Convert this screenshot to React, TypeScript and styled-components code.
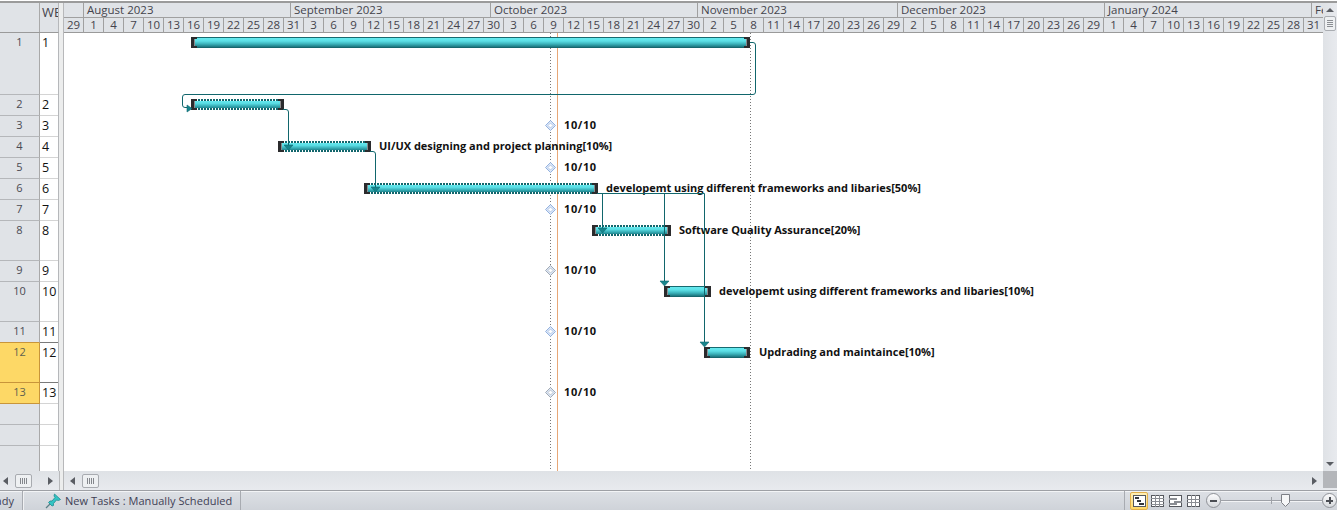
import React from 'react'
import styled, { createGlobalStyle } from 'styled-components'

const GlobalStyle = createGlobalStyle`
  html, body { margin: 0; padding: 0; background: #fff; overflow: hidden; }
  body { font-family: "Open Sans", "Noto Sans", sans-serif; }
`

const rows = [
  { n: 1, h: 62 }, { n: 2, h: 21 }, { n: 3, h: 21 }, { n: 4, h: 21 }, { n: 5, h: 21 },
  { n: 6, h: 21 }, { n: 7, h: 21 }, { n: 8, h: 40 }, { n: 9, h: 21 }, { n: 10, h: 40 },
  { n: 11, h: 21, next: true }, { n: 12, h: 40, on: true, next: true }, { n: 13, h: 21, on: true },
  { h: 21 }, { h: 21 }, { h: 26 },
]

const months = [
  { label: 'August 2023', w: 207 },
  { label: 'September 2023', w: 200 },
  { label: 'October 2023', w: 207 },
  { label: 'November 2023', w: 200 },
  { label: 'December 2023', w: 207 },
  { label: 'January 2024', w: 207 },
  { label: 'February 2024', w: 40 },
]

const days = [
  29, 1, 4, 7, 10, 13, 16, 19, 22, 25, 28, 31, 3, 6, 9, 12, 15, 18, 21, 24, 27, 30, 3, 6, 9, 12, 15, 18, 21, 24, 27, 30,
  2, 5, 8, 11, 14, 17, 20, 23, 26, 29, 2, 5, 8, 11, 14, 17, 20, 23, 26, 29, 1, 4, 7, 10, 13, 16, 19, 22, 25, 28, 31,
]

// chart coordinates: x from the left of the page minus 64, y minus 33
const bars = [
  { x: 127, y: 4, w: 559, progress: false },
  { x: 127, y: 66, w: 93, progress: true },
  { x: 214, y: 108, w: 93, progress: true },
  { x: 300, y: 150, w: 234, progress: true },
  { x: 528, y: 192, w: 79, progress: true },
  { x: 600, y: 253, w: 47, progress: false },
  { x: 640, y: 314, w: 46, progress: false },
]

const labels = [
  { x: 315, y: 105, t: 'UI/UX designing and project planning[10%]' },
  { x: 542, y: 147, t: 'developemt using different frameworks and libaries[50%]' },
  { x: 615, y: 189, t: 'Software Quality Assurance[20%]' },
  { x: 655, y: 250, t: 'developemt using different frameworks and libaries[10%]' },
  { x: 695, y: 311, t: 'Updrading and maintaince[10%]' },
]

const dates = [84, 126, 168, 229, 290, 351]

const milestones = [
  { y: 92, c: '#94b2e0' }, { y: 134, c: '#94b2e0' }, { y: 176, c: '#94b2e0' },
  { y: 237, c: '#a3abb5' }, { y: 298, c: '#94b2e0' }, { y: 359, c: '#a3abb5' },
]

const arrows = [
  [220, 112], [307, 154], [534, 195], [596, 248], [636, 309],
]

const App = styled.div`
  width: 1337px;
  height: 510px;
  display: flex;
  flex-direction: column;
  overflow: hidden;
  color: #3b3b46;
`
const TopEdge = styled.div`
  height: 3px;
  background: linear-gradient(#fff 0, #fff 1px, #9b9b9b 1px, #9b9b9b 3px);
  flex: none;
`
const Main = styled.div`
  display: flex;
  height: 468px;
  flex: none;
`
const TablePane = styled.div`
  width: 59px;
  flex: none;
  overflow: hidden;
  display: flex;
  flex-direction: column;
`
const HeaderRow = styled.div`
  display: flex;
  height: 29px;
  flex: none;
  border-bottom: 1px solid #9a9a9a;
  box-sizing: content-box;
  border-right: 1px solid #b5b7ba;
`
const Corner = styled.div`
  width: 40px;
  flex: none;
  box-sizing: border-box;
  background: #e0e3e7;
  border-right: 1px solid #a9a9a9;
`
const ColHead = styled.div`
  flex: 1;
  background: #e0e3e7;
  font-size: 13px;
  line-height: 18px;
  padding-left: 2px;
  overflow: hidden;
  white-space: nowrap;
  box-sizing: border-box;
  color: #44444c;
`
const Row = styled.div<{ $h: number }>`
  display: flex;
  height: ${p => p.$h}px;
  flex: none;
  border-right: 1px solid #b5b7ba;
`
const RowHead = styled.div<{ $on?: boolean; $next?: boolean }>`
  width: 40px;
  flex: none;
  box-sizing: border-box;
  background: ${p => (p.$on ? '#fdd866' : '#e0e3e7')};
  border-right: 1px solid ${p => (p.$on ? '#c8953a' : '#a9a9a9')};
  border-bottom: 1px solid ${p => (p.$on || p.$next ? '#c8953a' : '#b5b7ba')};
  font-size: 11px;
  line-height: 12px;
  padding-top: 3px;
  text-align: center;
  color: ${p => (p.$on ? '#5d6150' : '#4a4a52')};
`
const RowId = styled.div<{ $next?: boolean }>`
  flex: 1;
  box-sizing: border-box;
  border-bottom: 1px solid ${p => (p.$next ? '#7a7a7a' : '#d4d4d4')};
  font-size: 12.5px;
  line-height: 16px;
  padding: 2px 0 0 2px;
  color: #111;
`
const Splitter = styled.div`
  width: 5px;
  flex: none;
  background: linear-gradient(90deg, #eceded 0, #eceded 4px, #b7b8ba 4px, #b7b8ba 5px);
`
const ChartPane = styled.div`
  width: 1259px;
  flex: none;
  display: flex;
  flex-direction: column;
`
const ScaleRow = styled.div<{ $h: number }>`
  display: flex;
  height: ${p => p.$h}px;
  flex: none;
  background: #e0e3e7;
  overflow: hidden;
`
const Month = styled.div<{ $w: number }>`
  width: ${p => p.$w}px;
  flex: none;
  box-sizing: border-box;
  border-right: 1px solid #a0a0a0;
  font-size: 11.5px;
  line-height: 14px;
  padding-left: 3px;
  white-space: nowrap;
  overflow: hidden;
  color: #44444c;
`
const LeadCell = styled.div`
  width: 20px;
  flex: none;
  box-sizing: border-box;
  border-right: 1px solid #a0a0a0;
`
const Day = styled.div`
  width: 20px;
  flex: none;
  box-sizing: border-box;
  border-right: 1px solid #a0a0a0;
  border-top: 1px solid #a0a0a0;
  border-bottom: 1px solid #9a9a9a;
  font-size: 11.5px;
  line-height: 14px;
  height: 16px;
  text-align: center;
  color: #44444c;
`
const Canvas = styled.div`
  position: relative;
  flex: 1;
  background: #fff;
  overflow: hidden;
`
const Links = styled.svg`
  position: absolute;
  left: 0;
  top: 0;
  z-index: 2;
`
const GuideLines = styled.svg`
  position: absolute;
  left: 0;
  top: 0;
`
const Bar = styled.div<{ $x: number; $y: number; $w: number; $progress: boolean }>`
  position: absolute;
  left: ${p => p.$x}px;
  top: ${p => p.$y}px;
  width: ${p => p.$w}px;
  height: 11px;
  background: ${p =>
    p.$progress
      ? 'linear-gradient(#fff 0, #fff 2px, #66eaf0 2px, #58dbe2 4.5px, #38aeb6 7px, #20868f 9px, #fff 9px)'
      : 'linear-gradient(#176a70 0, #176a70 1px, #66eaf0 1px, #5ce0e6 4px, #3ab2ba 7px, #1a757d 10px, #12585e 11px)'};
  &::before,
  &::after {
    content: '';
    position: absolute;
    top: 0;
    width: 3px;
    height: 7px;
    border: 2px solid #2b2b2d;
    z-index: 1;
  }
  &::before {
    left: 0;
    border-right: 0;
    border-left-width: 3px;
    box-shadow: inset 1px 0 0 #8a8a8d;
  }
  &::after {
    right: 0;
    border-left: 0;
    border-right-width: 3px;
    box-shadow: inset -1px 0 0 #8a8a8d;
  }
`
const ProgressLine = styled.div<{ $bottom?: boolean }>`
  position: absolute;
  left: 4px;
  right: 4px;
  ${p => (p.$bottom ? 'bottom: 0;' : 'top: 0;')}
  height: 2px;
  background: repeating-linear-gradient(90deg, #12666c 0, #12666c 2px, #fff 2px, #fff 3px);
`
const BarLabel = styled.div<{ $x: number; $y: number; $date?: boolean }>`
  position: absolute;
  left: ${p => p.$x}px;
  top: ${p => p.$y}px;
  font-size: 11px;
  line-height: 16px;
  font-weight: 700;
  letter-spacing: ${p => (p.$date ? '0.6px' : '-0.02px')};
  color: #111;
  white-space: nowrap;
`
const Diamond = styled.svg<{ $y: number }>`
  position: absolute;
  left: 481px;
  top: ${p => p.$y - 5}px;
`
const VScroll = styled.div`
  width: 14px;
  flex: none;
  background: linear-gradient(90deg, #dfe2e6, #e8eaee);
  display: flex;
  flex-direction: column;
  align-items: center;
  justify-content: space-between;
  padding-bottom: 5px;
  box-sizing: border-box;
`
const VThumb = styled.div`
  width: 12px;
  height: 15px;
  box-sizing: border-box;
  border: 1px solid #aaadb2;
  border-radius: 2px;
  background: #eef0f2;
  display: flex;
  flex-direction: column;
  justify-content: center;
  gap: 1px;
  padding: 0 2px;
`
const VThumbLine = styled.div`
  height: 1px;
  background: #8b8e93;
`
const Arrow = styled.div<{ $dir: 'up' | 'down' | 'left' | 'right' }>`
  width: 0;
  height: 0;
  flex: none;
  ${p =>
    p.$dir === 'up'
      ? 'border-left: 4px solid transparent; border-right: 4px solid transparent; border-bottom: 4px solid #5a5d63;'
      : p.$dir === 'down'
        ? 'border-left: 4px solid transparent; border-right: 4px solid transparent; border-top: 4px solid #5a5d63;'
        : p.$dir === 'left'
          ? 'border-top: 4px solid transparent; border-bottom: 4px solid transparent; border-right: 5px solid #5a5d63;'
          : 'border-top: 4px solid transparent; border-bottom: 4px solid transparent; border-left: 5px solid #5a5d63;'}
`
const VTop = styled.div`
  display: flex;
  flex-direction: column;
  align-items: center;
  gap: 4px;
  padding-top: 5px;
`
const HScrollRow = styled.div`
  height: 19px;
  flex: none;
  display: flex;
  background: linear-gradient(#dfe2e6, #e8eaee);
`
const HPart = styled.div<{ $w: number; $pad: number }>`
  width: ${p => p.$w}px;
  flex: none;
  display: flex;
  align-items: center;
  box-sizing: border-box;
  padding-left: ${p => p.$pad}px;
  position: relative;
`
const HThumb = styled.div`
  width: 17px;
  height: 14px;
  margin-left: 7px;
  box-sizing: border-box;
  border: 1px solid #a8abb0;
  border-radius: 2px;
  background: #eef0f2;
  display: flex;
  justify-content: center;
  align-items: center;
  gap: 1px;
`
const HThumbLine = styled.div`
  width: 1px;
  height: 6px;
  background: #84878c;
`
const RightArrow = styled.div`
  margin-left: auto;
  margin-right: 6px;
`
const ScrollSplit = styled.div`
  width: 5px;
  flex: none;
  align-self: stretch;
  background: linear-gradient(90deg, #b7b8ba 0, #b7b8ba 1px, #eceded 1px, #eceded 4px, #b7b8ba 4px, #b7b8ba 5px);
`
const ScrollCorner = styled.div`
  width: 14px;
  flex: none;
  height: 17px;
  background: #b4b6ba;
`
const StatusBar = styled.div`
  flex: 1;
  display: flex;
  align-items: stretch;
  box-sizing: border-box;
  border-top: 1px solid #9ea0a5;
  box-shadow: inset 0 1px 0 #f3f4f6;
  background: linear-gradient(#dde0e5, #cfd3d9);
  font-size: 11px;
  letter-spacing: 0.05px;
  color: #3f3f55;
`
const Ready = styled.div`
  width: 23px;
  flex: none;
  overflow: hidden;
  direction: rtl;
  line-height: 19px;
  border-right: 1px solid #a8abb1;
  box-sizing: border-box;
  padding-right: 8px;
  white-space: nowrap;
`
const TaskMode = styled.div`
  width: 218px;
  flex: none;
  box-sizing: border-box;
  border-left: 1px solid #f0f1f3;
  border-right: 1px solid #a8abb1;
  padding-left: 21px;
  display: flex;
  align-items: center;
  gap: 3px;
`
const StatusRight = styled.div`
  margin-left: auto;
  width: 213px;
  flex: none;
  display: flex;
  align-items: center;
  box-sizing: border-box;
  border-left: 1px solid #a8abb1;
  padding-left: 5px;
  position: relative;
`
const ViewBtn = styled.div<{ $on?: boolean }>`
  width: 18px;
  height: 18px;
  flex: none;
  display: flex;
  align-items: center;
  justify-content: center;
  box-sizing: border-box;
  border-radius: 2px;
  ${p => (p.$on ? 'background: linear-gradient(#fff0b8, #ffd766); border: 1px solid #e3b04b;' : '')}
`
const ZoomGroup = styled.div`
  display: flex;
  align-items: center;
  margin-left: 4px;
  flex: 1;
  position: relative;
`
const ZoomBtn = styled.div`
  width: 15px;
  height: 15px;
  flex: none;
  box-sizing: border-box;
  border-radius: 50%;
  border: 1px solid #8f9298;
  background: linear-gradient(#fbfbfc, #d7dade);
  display: flex;
  align-items: center;
  justify-content: center;
  position: relative;
`
const Minus = styled.div`
  width: 7px;
  height: 2px;
  background: #4b4e54;
`
const PlusV = styled.div`
  position: absolute;
  width: 2px;
  height: 7px;
  background: #4b4e54;
`
const Track = styled.div`
  flex: 1;
  height: 1px;
  background: #9ea1a7;
  box-shadow: 0 1px 0 #f2f3f5;
  position: relative;
`
const TrackTick = styled.div`
  position: absolute;
  left: 50px;
  top: -3px;
  width: 1px;
  height: 7px;
  background: #9ea1a7;
`
const Thumb = styled.svg`
  position: absolute;
  left: 60px;
  top: -6px;
`

const ViewIcon = ({ kind }: { kind: number }) => (
  <svg width="13" height="12" viewBox="0 0 13 12" shapeRendering="crispEdges">
    <rect x="0.5" y="0.5" width="12" height="11" fill="#fff" stroke="#55585e" />
    {kind === 0 && <path d="M2 3h4M4 6h4M6 9h5" stroke="#33363c" strokeWidth="1.4" fill="none" />}
    {kind === 1 && <path d="M0 3.500h13M0 6.500h13M0 9.500h13M4.500 0v12M8.500 0v12" stroke="#8a8d93" fill="none" />}
    {kind === 2 && <path d="M0 3.500h8M5 6.500h8M0 9h8" stroke="#8a8d93" strokeWidth="2" fill="none" />}
    {kind === 3 && <path d="M0 4.500h13M0 7.500h13M4.500 0v12M8.500 0v12" stroke="#8a8d93" fill="none" />}
  </svg>
)

const PinIcon = () => (
  <svg width="17" height="16" viewBox="0 0 17 16">
    <path d="M1 15 L6.500 9.500" stroke="#5a7f86" strokeWidth="1.2" />
    <path d="M9.500 1 L15.500 6.500 L13.500 7.500 L11.500 7 L8.500 10.500 L8.500 12.500 L7 13 L3.500 9.500 L5 8 L7 8 L10 4.500 L9 3 Z" fill="#34c4c4" stroke="#1f8d92" strokeWidth="0.8" />
  </svg>
)

const ThumbLines = () => (
  <>
    <HThumbLine />
    <HThumbLine />
    <HThumbLine />
    <HThumbLine />
  </>
)

export default function GanttView() {
  return (
    <App>
      <GlobalStyle />
      <TopEdge />
      <Main>
        <TablePane>
          <HeaderRow>
            <Corner />
            <ColHead>WBS</ColHead>
          </HeaderRow>
          {rows.map((r, i) => (
            <Row key={i} $h={r.h}>
              <RowHead $on={r.on} $next={r.next}>{r.n}</RowHead>
              <RowId $next={r.next}>{r.n}</RowId>
            </Row>
          ))}
        </TablePane>
        <Splitter />
        <ChartPane>
          <ScaleRow $h={14}>
            <LeadCell />
            {months.map(m => (
              <Month key={m.label} $w={m.w}>{m.label}</Month>
            ))}
          </ScaleRow>
          <ScaleRow $h={16}>
            {days.map((d, i) => (
              <Day key={i}>{d}</Day>
            ))}
          </ScaleRow>
          <Canvas>
            <GuideLines width="1259" height="438" fill="none">
              <path d="M486.500 0V438M686.500 0V438" stroke="#777" strokeDasharray="1 2" />
              <path d="M493.500 0V438" stroke="#e8a878" />
            </GuideLines>
            {bars.map((b, i) => (
              <Bar key={i} $x={b.x} $y={b.y} $w={b.w} $progress={b.progress}>
                {b.progress && <ProgressLine />}
                {b.progress && <ProgressLine $bottom />}
              </Bar>
            ))}
            {milestones.map((m, i) => (
              <Diamond key={i} $y={m.y} width="11" height="11" viewBox="0 0 11 11">
                <path d="M5.500.5l5 5-5 5-5-5z" fill="#dbe6f6" stroke={m.c} />
                <path d="M5.500 3l2.500 2.500-2.500 2.500-2.500-2.500z" fill="#fff" stroke={m.c} strokeWidth="0.6" />
              </Diamond>
            ))}
            {labels.map((l, i) => (
              <BarLabel key={i} $x={l.x} $y={l.y}>{l.t}</BarLabel>
            ))}
            {dates.map((y, i) => (
              <BarLabel key={i} $x={500} $y={y} $date>10/10</BarLabel>
            ))}
            <Links width="1259" height="438" fill="none">
              <g stroke="#11666c">
                <path d="M686 9.500h3q2.500 0 2.500 2.500v47q0 2.500-2.500 2.500H121q-2.500 0-2.500 2.500v8q0 2.500 2.500 2.500h4" />
                <path d="M219 76.500h3q2.500 0 2.500 2.500V112" />
                <path d="M306 118.500h3q2.500 0 2.500 2.500V154" />
                <path d="M533 160.500H640.500V309M538.500 160.500V195M600.500 160.500V248" />
              </g>
              <path d="M123 72l5 3.500-5 3.500z" fill="#17858c" stroke="#0f6a72" strokeWidth="0.6" />
              {arrows.map(([x, y]) => (
                <path key={x} d={`M${x} ${y}h9l-4.500 5z`} fill="#17858c" stroke="#0f6a72" strokeWidth="0.6" />
              ))}
            </Links>
          </Canvas>
        </ChartPane>
        <VScroll>
          <VTop>
            <Arrow $dir="up" />
            <VThumb>
              <VThumbLine />
              <VThumbLine />
              <VThumbLine />
              <VThumbLine />
            </VThumb>
          </VTop>
          <Arrow $dir="down" />
        </VScroll>
      </Main>
      <HScrollRow>
        <HPart $w={59} $pad={3}>
          <Arrow $dir="left" />
          <HThumb>
            <ThumbLines />
          </HThumb>
          <RightArrow>
            <Arrow $dir="right" />
          </RightArrow>
        </HPart>
        <ScrollSplit />
        <HPart $w={1259} $pad={6}>
          <Arrow $dir="left" />
          <HThumb>
            <ThumbLines />
          </HThumb>
          <RightArrow>
            <Arrow $dir="right" />
          </RightArrow>
        </HPart>
        <ScrollCorner />
      </HScrollRow>
      <StatusBar>
        <Ready>Ready</Ready>
        <TaskMode>
          <PinIcon />
          New Tasks : Manually Scheduled
        </TaskMode>
        <StatusRight>
          <ViewBtn $on><ViewIcon kind={0} /></ViewBtn>
          <ViewBtn><ViewIcon kind={1} /></ViewBtn>
          <ViewBtn><ViewIcon kind={2} /></ViewBtn>
          <ViewBtn><ViewIcon kind={3} /></ViewBtn>
          <ZoomGroup>
            <ZoomBtn><Minus /></ZoomBtn>
            <Track>
              <TrackTick />
              <Thumb width="9" height="13" viewBox="0 0 9 13">
                <path d="M.5.5h8v8l-4 4-4-4z" fill="#f6f7f8" stroke="#7d8086" />
              </Thumb>
            </Track>
            <ZoomBtn><Minus /><PlusV /></ZoomBtn>
          </ZoomGroup>
        </StatusRight>
      </StatusBar>
    </App>
  )
}
